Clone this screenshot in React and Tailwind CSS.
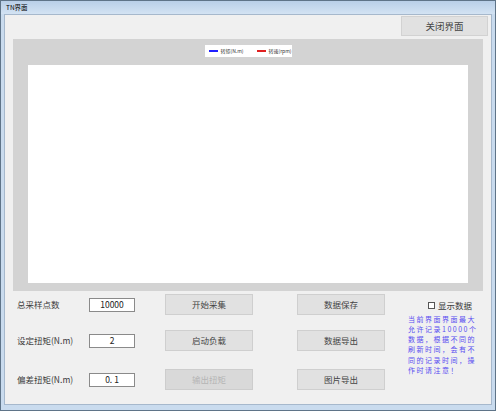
import React from 'react'

const font = { fontFamily: '"Noto Sans CJK SC", "Noto Sans", sans-serif' }

function Btn({ children, disabled }) {
  return (
    <div
      className={
        'flex h-[21px] w-[88px] items-center justify-center border text-[8.5px] ' +
        (disabled
          ? 'border-[#cdcdcd] bg-[#d9d9d9] text-[#b5b5b5]'
          : 'border-[#cfcfcf] bg-[#e1e1e1] text-[#444]')
      }
    >
      {children}
    </div>
  )
}

function Row({ label, value, b1, b2, b1Disabled, className }) {
  return (
    <div className={'flex h-[21px] items-center ' + className}>
      <div className="ml-[12px] w-[72px] whitespace-nowrap text-[8.5px] text-[#3a3a3a]">{label}</div>
      <div className="flex h-[14px] w-[46px] items-center justify-center border border-[#8a8a8a] bg-white text-[8.5px] text-[#222]">
        {value}
      </div>
      <div className="ml-[30px]">
        <Btn disabled={b1Disabled}>{b1}</Btn>
      </div>
      <div className="ml-[44px]">
        <Btn>{b2}</Btn>
      </div>
    </div>
  )
}

export default function App() {
  const notice = ['当前界面界面最大', '允许记录10000个', '数据，根据不同的', '刷新时间，会有不', '同的记录时间，操', '作时请注意！']
  return (
    <div style={font} className="flex h-[411px] w-[496px] flex-col border border-[#5f7488] bg-[#c9dbee]">
      {/* title bar */}
      <div className="flex h-[13px] items-center bg-gradient-to-b from-[#b9cfe8] to-[#d3e3f3] pl-[5px] text-[6.5px] text-black">
        TN界面
      </div>

      {/* client area */}
      <div className="mx-[3px] mb-[5px] flex flex-1 flex-col border border-[#a6b8cc] bg-[#f0f0f0]">
        <div className="flex justify-end pr-[3px] pt-[1px]">
          <div className="flex h-[20px] w-[87px] items-center justify-center border border-[#d2d2d2] bg-[#e1e1e1] text-[9.5px] text-[#444]">
            关闭界面
          </div>
        </div>

        {/* chart panel */}
        <div className="ml-[8px] mt-[3px] flex h-[252px] w-[470px] flex-col items-center bg-[#d3d3d3]">
          <div className="mt-[6px] flex h-[12px] w-[87px] items-center gap-[2px] whitespace-nowrap bg-white pl-[4px] text-[5px] text-[#333]">
            <span className="h-[1.5px] w-[10px] bg-[#2020ff]" />
            <span>转矩(N.m)</span>
            <span className="ml-[12px] h-[1.5px] w-[9px] bg-[#e02020]" />
            <span>转速(rpm)</span>
          </div>
          <div className="mt-[8px] h-[218px] w-[440px] bg-white" />
        </div>

        {/* controls */}
        <div className="mt-[3px] flex">
          <div className="flex flex-col">
            <Row label="总采样点数" value="10000" b1="开始采集" b2="数据保存" />
            <Row label="设定扭矩(N.m)" value="2" b1="启动负载" b2="数据导出" className="mt-[15px]" />
            <Row label="偏差扭矩(N.m)" value="0. 1" b1="输出扭矩" b1Disabled b2="图片导出" className="mt-[18px]" />
          </div>
          <div className="ml-[23px] flex flex-col">
            <div className="mt-[5px] flex items-center gap-[3px] pl-[20px] text-[8.5px] text-[#3a3a3a]">
              <span className="h-[7px] w-[7px] border border-[#555] bg-white" />
              <span>显示数据</span>
            </div>
            <div className="mt-[2px] whitespace-nowrap text-[7px] leading-[10.2px] tracking-[1.5px] text-[#5a4ff0]">
              {notice.map((l) => (
                <div key={l}>{l}</div>
              ))}
            </div>
          </div>
        </div>
      </div>
    </div>
  )
}
